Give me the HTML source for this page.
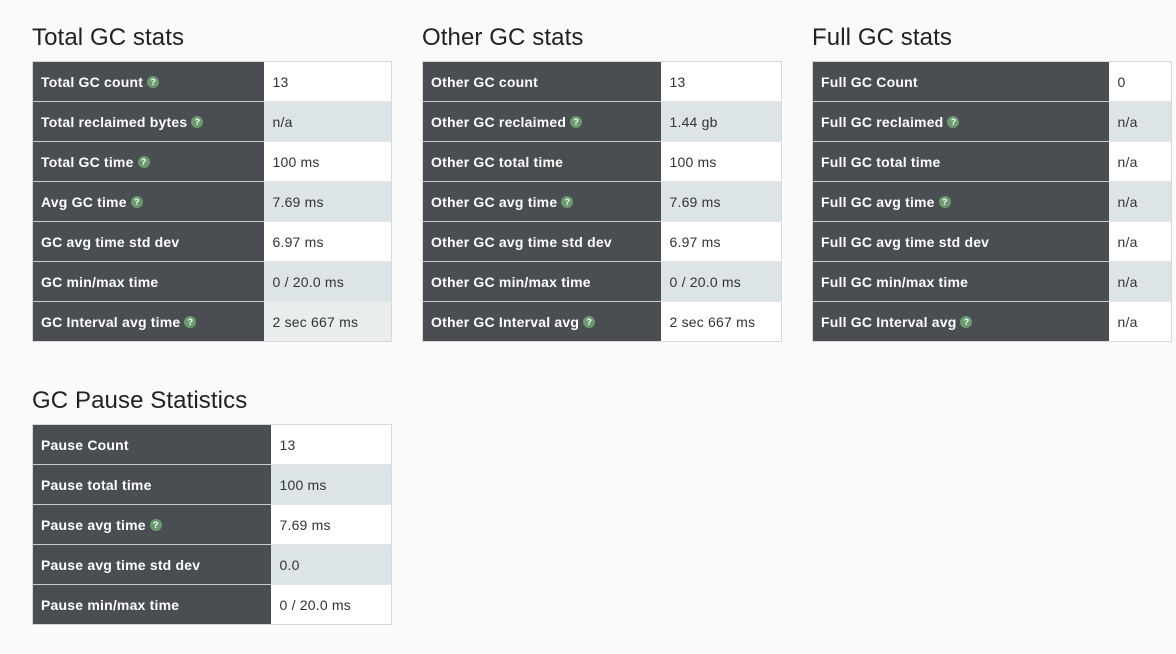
<!DOCTYPE html>
<html><head><meta charset="utf-8"><style>
body{margin:0;background:#fafafa;font-family:"Liberation Sans",sans-serif;width:1176px;height:654px;position:relative;overflow:hidden}
h2{position:absolute;margin:0;font-weight:normal;font-size:24px;color:#222;letter-spacing:0.1px}
table{position:absolute;border-collapse:collapse;border:1px solid #d8d8d8;font-size:14px}
td{height:39px;padding:0;border-top:1px solid #e4e4e4;line-height:16px}
tr:first-child td{border-top:none}
td.l{background:#4a4d51;color:#fff;font-weight:bold;padding-left:8px;border-top:1px solid #c8cacc;letter-spacing:0.2px}
tr:first-child td.l{border-top:none}
td.v{background:#fff;color:#333;padding-left:9px;letter-spacing:0.2px}
tr:nth-child(even) td.v{background:#dde4e8}
tr.h td.v{background:#e9eded}
.q{display:inline-block;width:12px;height:12px;border-radius:50%;background:#6a9a6e;color:#fff;font-size:9px;line-height:12px;text-align:center;vertical-align:middle;position:relative;top:-1px;margin-left:4px;letter-spacing:0}
</style></head><body>
<h2 style="left:32px;top:24px">Total GC stats</h2>
<table style="left:32px;top:61px;width:360px"><colgroup><col style="width:231px"><col></colgroup>
<tr><td class="l">Total GC count<span class="q">?</span></td><td class="v">13</td></tr>
<tr><td class="l">Total reclaimed bytes<span class="q">?</span></td><td class="v">n/a</td></tr>
<tr><td class="l">Total GC time<span class="q">?</span></td><td class="v">100 ms</td></tr>
<tr><td class="l">Avg GC time<span class="q">?</span></td><td class="v">7.69 ms</td></tr>
<tr><td class="l">GC avg time std dev</td><td class="v">6.97 ms</td></tr>
<tr><td class="l">GC min/max time</td><td class="v">0 / 20.0 ms</td></tr>
<tr class="h"><td class="l">GC Interval avg time<span class="q">?</span></td><td class="v">2 sec 667 ms</td></tr>
</table>
<h2 style="left:422px;top:24px">Other GC stats</h2>
<table style="left:422px;top:61px;width:360px"><colgroup><col style="width:238px"><col></colgroup>
<tr><td class="l">Other GC count</td><td class="v">13</td></tr>
<tr><td class="l">Other GC reclaimed<span class="q">?</span></td><td class="v">1.44 gb</td></tr>
<tr><td class="l">Other GC total time</td><td class="v">100 ms</td></tr>
<tr><td class="l">Other GC avg time<span class="q">?</span></td><td class="v">7.69 ms</td></tr>
<tr><td class="l">Other GC avg time std dev</td><td class="v">6.97 ms</td></tr>
<tr><td class="l">Other GC min/max time</td><td class="v">0 / 20.0 ms</td></tr>
<tr><td class="l">Other GC Interval avg<span class="q">?</span></td><td class="v">2 sec 667 ms</td></tr>
</table>
<h2 style="left:812px;top:24px">Full GC stats</h2>
<table style="left:812px;top:61px;width:360px"><colgroup><col style="width:296px"><col></colgroup>
<tr><td class="l">Full GC Count</td><td class="v">0</td></tr>
<tr><td class="l">Full GC reclaimed<span class="q">?</span></td><td class="v">n/a</td></tr>
<tr><td class="l">Full GC total time</td><td class="v">n/a</td></tr>
<tr><td class="l">Full GC avg time<span class="q">?</span></td><td class="v">n/a</td></tr>
<tr><td class="l">Full GC avg time std dev</td><td class="v">n/a</td></tr>
<tr><td class="l">Full GC min/max time</td><td class="v">n/a</td></tr>
<tr><td class="l">Full GC Interval avg<span class="q">?</span></td><td class="v">n/a</td></tr>
</table>
<h2 style="left:32px;top:387px">GC Pause Statistics</h2>
<table style="left:32px;top:424px;width:360px"><colgroup><col style="width:238px"><col></colgroup>
<tr><td class="l">Pause Count</td><td class="v">13</td></tr>
<tr><td class="l">Pause total time</td><td class="v">100 ms</td></tr>
<tr><td class="l">Pause avg time<span class="q">?</span></td><td class="v">7.69 ms</td></tr>
<tr><td class="l">Pause avg time std dev</td><td class="v">0.0</td></tr>
<tr><td class="l">Pause min/max time</td><td class="v">0 / 20.0 ms</td></tr>
</table>
</body></html>
